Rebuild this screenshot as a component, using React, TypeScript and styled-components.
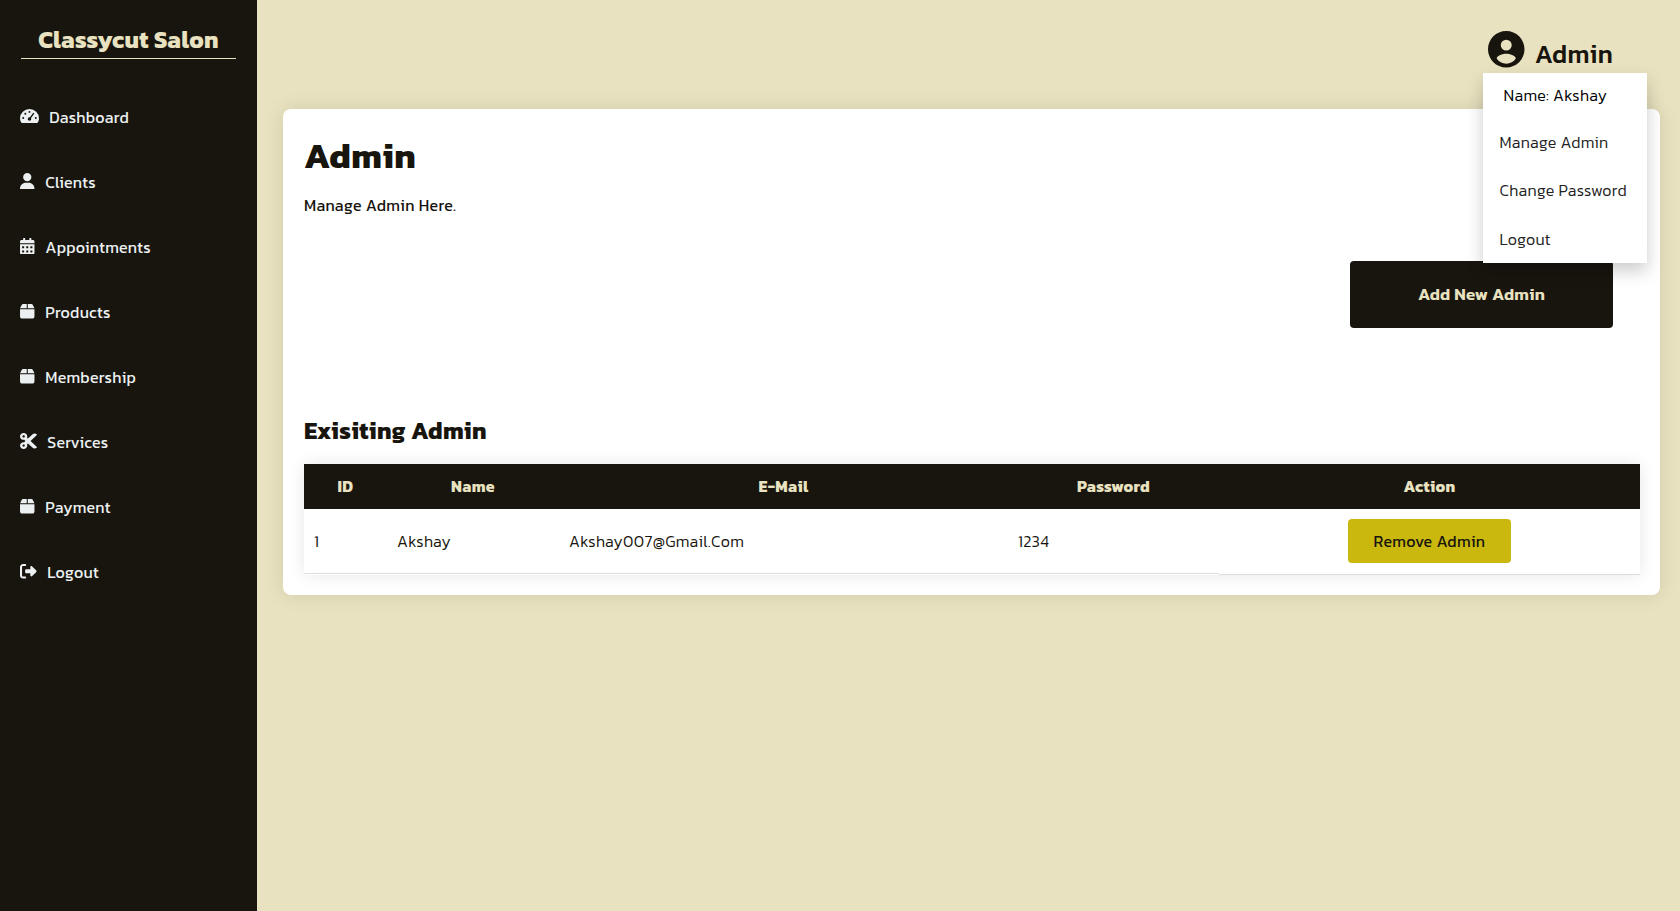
import React from "react";
import styled, { createGlobalStyle } from "styled-components";
import { FaCalendarAlt, FaCut } from "react-icons/fa";
import { FaUser, FaBox, FaRightFromBracket } from "react-icons/fa6";

const dark = "#18150e";
const cream = "#e9e2c0";
const family = `Kanit, "Noto Sans", "Liberation Sans", sans-serif`;

const GlobalStyle = createGlobalStyle`
  *, *::before, *::after { box-sizing: border-box; }
  body {
    margin: 0;
    background: ${cream};
    color: ${dark};
    font: 300 16px ${family};
    letter-spacing: 0.32px;
    overflow: hidden;
  }
  button { letter-spacing: inherit; }
`;

const Page = styled.div`
  display: flex;
  height: 100vh;
`;

const Sidebar = styled.aside`
  width: 257px;
  flex: none;
  padding: 24px 21px 0;
  background: ${dark};
`;

const Brand = styled.div`
  height: 35px;
  border-bottom: 1px solid ${cream};
  color: ${cream};
  font-weight: 700;
  font-size: 24px;
  line-height: 31px;
  letter-spacing: 0.32px;
  text-align: center;
  white-space: nowrap;
`;

const Nav = styled.nav`
  display: flex;
  flex-direction: column;
  margin: 25px 0 0 -1px;
`;

const NavItem = styled.a`
  display: flex;
  align-items: center;
  gap: 10.3px;
  height: 65px;
  padding-top: 1px;
  color: #ecf0f1;
  font-weight: 400;
  letter-spacing: 0.22px;
`;

const NavIcon = styled.span<{ $w: number }>`
  display: flex;
  justify-content: center;
  width: ${(p) => p.$w}px;
  margin-bottom: 2px;
  svg { flex: none; }
`;

const Main = styled.main`
  flex: 1;
  padding: 0 20px 0 26px;
`;

const Header = styled.header`
  position: relative;
  display: flex;
  justify-content: flex-end;
  height: 109px;
  padding: 31px 47px 0 0;
`;

const Account = styled.div`
  display: flex;
  align-items: flex-start;
  gap: 10px;
  svg { display: block; }
`;

const AccountName = styled.span`
  padding-top: 7px;
  font-weight: 500;
  font-size: 25.6px;
  line-height: 32px;
`;

const Menu = styled.div`
  position: absolute;
  top: 73px;
  right: 13px;
  z-index: 1;
  width: 164px;
  height: 190px;
  background: #fff;
  box-shadow: 0 8px 16px rgba(0, 0, 0, 0.2);
  white-space: nowrap;
`;

const MenuName = styled.div`
  height: 45px;
  padding-left: 20.5px;
  color: #000;
  line-height: 44px;
`;

const MenuLink = styled.a`
  display: block;
  height: 48.4px;
  padding-left: 16.5px;
  color: #222;
  line-height: 48px;
`;

const Card = styled.section`
  height: 486px;
  padding: 25px 20px 0 21px;
  border-radius: 8px;
  background: #fff;
  box-shadow: 0 0 20px rgba(0, 0, 0, 0.1);
`;

const Title = styled.h1`
  margin: 0;
  font-weight: 700;
  font-size: 35.6px;
  line-height: 44px;
  letter-spacing: 0.4px;
`;

const Subtitle = styled.p`
  margin: 17px 0 0;
  font-weight: 400;
  line-height: 20px;
`;

const Actions = styled.div`
  display: flex;
  justify-content: flex-end;
  margin-top: 46px;
  padding-right: 27px;
`;

const AddButton = styled.button`
  width: 263px;
  height: 67px;
  padding: 0 0 1px;
  border: 0;
  border-radius: 4px;
  background: ${dark};
  color: ${cream};
  font: 600 17px ${family};
  letter-spacing: 0.25px;
`;

const SectionTitle = styled.h2`
  margin: 86px 0 0;
  font-weight: 700;
  font-size: 24px;
  line-height: 33px;
  letter-spacing: 0.32px;
`;

const Table = styled.table`
  width: 1336px;
  margin-top: 17px;
  border-collapse: separate;
  border-spacing: 0;
  table-layout: fixed;
  box-shadow: 0 0 15px rgba(0, 0, 0, 0.1);
`;

const Th = styled.th<{ $w: number }>`
  width: ${(p) => p.$w}px;
  height: 45px;
  padding: 0 0 1px;
  background: ${dark};
  color: ${cream};
  font-weight: 700;
`;

const Td = styled.td`
  padding: 0;
  vertical-align: top;
`;

const CellBox = styled.div`
  height: 65px;
  padding-left: 10px;
  border-bottom: 1px solid #ddd;
  line-height: 64px;
`;

const ActionBox = styled.div`
  display: flex;
  justify-content: center;
  height: 66px;
  padding-top: 10px;
  border-bottom: 1px solid #ddd;
`;

const RemoveButton = styled.button`
  width: 163px;
  height: 44px;
  padding: 0;
  border: 0;
  border-radius: 4px;
  background: #cab80f;
  color: ${dark};
  font: 400 16px ${family};
`;

const Gauge = () => (
  <svg width="19" height="14" viewBox="0 0 19 14.5" preserveAspectRatio="none">
    <path fill="currentColor" d="M9.5 0A9.5 9.5 0 0 0 0 9.5c0 1.7.45 3.3 1.2 4.6.2.3.5.4.8.4h15c.3 0 .6-.1.8-.4.75-1.3 1.2-2.9 1.2-4.6A9.5 9.5 0 0 0 9.5 0Z" />
    <g fill={dark}>
      <circle cx="3.2" cy="9.3" r="1" />
      <circle cx="5.3" cy="5" r="1" />
      <circle cx="9.5" cy="3" r="1" />
      <circle cx="15.8" cy="9.3" r="1" />
      <circle cx="9.5" cy="10.4" r="1.8" />
    </g>
    <path d="M9.6 10.2 13.6 4.6" stroke={dark} strokeWidth="1.4" strokeLinecap="round" />
  </svg>
);

const Avatar = () => (
  <svg width="36.5" height="36.5" viewBox="2 2 20 20">
    <path fill="currentColor" d="M12 2C6.48 2 2 6.48 2 12s4.48 10 10 10 10-4.48 10-10S17.52 2 12 2zm0 4.75a3 3 0 1 1 0 6 3 3 0 0 1 0-6zm0 13.2c-2.2 0-4.1-1.1-5.25-2.85C6.8 15.3 10.2 14.4 12 14.4s5.2.9 5.25 2.7C16.1 18.85 14.2 19.95 12 19.95z" />
  </svg>
);

const Scissors = styled(FaCut).attrs({ preserveAspectRatio: "none", viewBox: "0 32 448 448" })`
  width: 17px;
  height: 16px;
`;

const nav: { label: string; icon: React.ReactNode; w: number }[] = [
  { label: "Dashboard", icon: <Gauge />, w: 19 },
  { label: "Clients", icon: <FaUser size={16.5} />, w: 15 },
  { label: "Appointments", icon: <FaCalendarAlt size={16.5} />, w: 15 },
  { label: "Products", icon: <FaBox size={16.5} />, w: 15 },
  { label: "Membership", icon: <FaBox size={16.5} />, w: 15 },
  { label: "Services", icon: <Scissors />, w: 17 },
  { label: "Payment", icon: <FaBox size={16.5} />, w: 15 },
  { label: "Logout", icon: <FaRightFromBracket size={16.5} />, w: 17 },
];

const columns = [
  { label: "ID", w: 83 },
  { label: "Name", w: 172 },
  { label: "E-Mail", w: 449 },
  { label: "Password", w: 211 },
  { label: "Action", w: 421 },
];

const admin = ["1", "Akshay", "Akshay007@Gmail.Com", "1234"];

export default function App() {
  return (
    <Page>
      <GlobalStyle />
      <Sidebar>
        <Brand>Classycut Salon</Brand>
        <Nav>
          {nav.map((n) => (
            <NavItem key={n.label}>
              <NavIcon $w={n.w}>{n.icon}</NavIcon>
              {n.label}
            </NavItem>
          ))}
        </Nav>
      </Sidebar>
      <Main>
        <Header>
          <Account>
            <Avatar />
            <AccountName>Admin</AccountName>
          </Account>
          <Menu>
            <MenuName>Name: Akshay</MenuName>
            <MenuLink>Manage Admin</MenuLink>
            <MenuLink>Change Password</MenuLink>
            <MenuLink>Logout</MenuLink>
          </Menu>
        </Header>
        <Card>
          <Title>Admin</Title>
          <Subtitle>Manage Admin Here.</Subtitle>
          <Actions>
            <AddButton>Add New Admin</AddButton>
          </Actions>
          <SectionTitle>Exisiting Admin</SectionTitle>
          <Table>
            <thead>
              <tr>
                {columns.map((c) => (
                  <Th key={c.label} $w={c.w}>{c.label}</Th>
                ))}
              </tr>
            </thead>
            <tbody>
              <tr>
                {admin.map((value) => (
                  <Td key={value}>
                    <CellBox>{value}</CellBox>
                  </Td>
                ))}
                <Td>
                  <ActionBox>
                    <RemoveButton>Remove Admin</RemoveButton>
                  </ActionBox>
                </Td>
              </tr>
            </tbody>
          </Table>
        </Card>
      </Main>
    </Page>
  );
}
